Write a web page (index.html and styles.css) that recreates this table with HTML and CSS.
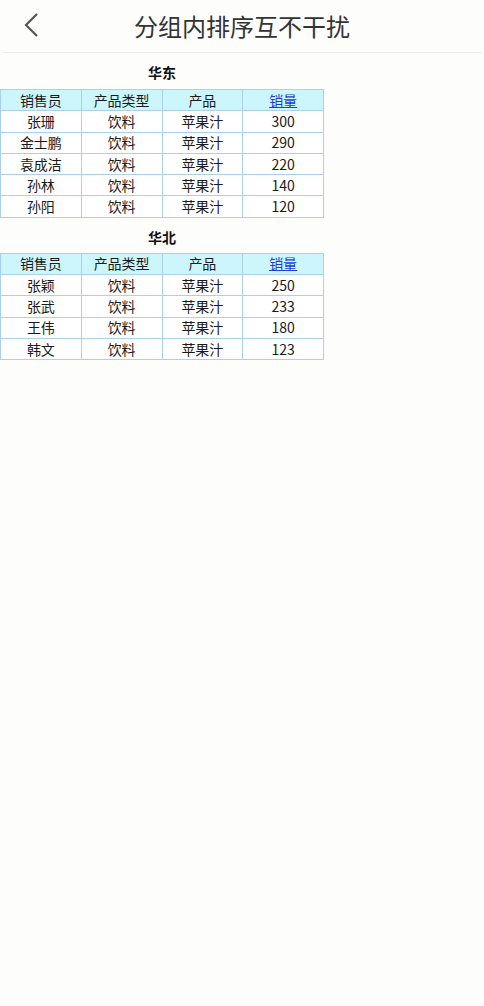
FILE: index.html
```html
<!DOCTYPE html>
<html lang="zh">
<head>
<meta charset="utf-8">
<link rel="stylesheet" href="styles.css">
</head>
<body>
<header class="topbar">
  <svg class="back" width="16" height="26" viewBox="0 0 16 26"><path d="M13 2 L2 13 L13 24" fill="none" stroke="#555" stroke-width="2.2"/></svg>
  <h1 class="title">分组内排序互不干扰</h1>
</header>
<main>
  <section class="group">
    <div class="group-title">华东</div>
    <table class="grid">
      <tr><th>销售员</th><th>产品类型</th><th>产品</th><th><a href="#">销量</a></th></tr>
      <tr><td>张珊</td><td>饮料</td><td>苹果汁</td><td>300</td></tr>
      <tr><td>金士鹏</td><td>饮料</td><td>苹果汁</td><td>290</td></tr>
      <tr><td>袁成洁</td><td>饮料</td><td>苹果汁</td><td>220</td></tr>
      <tr><td>孙林</td><td>饮料</td><td>苹果汁</td><td>140</td></tr>
      <tr><td>孙阳</td><td>饮料</td><td>苹果汁</td><td>120</td></tr>
    </table>
  </section>
  <section class="group">
    <div class="group-title">华北</div>
    <table class="grid">
      <tr><th>销售员</th><th>产品类型</th><th>产品</th><th><a href="#">销量</a></th></tr>
      <tr><td>张颖</td><td>饮料</td><td>苹果汁</td><td>250</td></tr>
      <tr><td>张武</td><td>饮料</td><td>苹果汁</td><td>233</td></tr>
      <tr><td>王伟</td><td>饮料</td><td>苹果汁</td><td>180</td></tr>
      <tr><td>韩文</td><td>饮料</td><td>苹果汁</td><td>123</td></tr>
    </table>
  </section>
</main>
</body>
</html>
```
FILE: styles.css
```css
html, body {
  margin: 0;
  padding: 0;
  background: #fdfdfc;
  font-family: "Noto Sans CJK SC", "Noto Sans", sans-serif;
  color: #222;
}
.topbar {
  height: 52px;
  margin: 0 2px;
  border-bottom: 1px solid #ececec;
  display: flex;
  align-items: center;
  justify-content: center;
  position: relative;
}
.back {
  position: absolute;
  left: 22px;
  top: 12px;
}
.title {
  margin: 0;
  font-size: 24px;
  font-weight: 400;
  color: #333;
  line-height: 52px;
}
.group {
  width: 324px;
}
.group-title {
  height: 36px;
  line-height: 38px;
  text-align: center;
  font-weight: 700;
  font-size: 14px;
  color: #111;
}
.group + .group .group-title {
  height: 35px;
}
.grid {
  border-collapse: collapse;
  width: 324px;
  table-layout: fixed;
  font-size: 14px;
}
.grid tr {
  height: 21.3px;
}
.grid th, .grid td {
  border: 1px solid #a9d0ee;
  padding: 0;
  text-align: center;
  line-height: 19px;
  font-weight: 400;
  color: #1a1a1a;
}
.grid th {
  background: #ccf6fc;
}
.grid th a {
  color: #1a3fd6;
  text-decoration: underline;
}
.grid td {
  background: #fff;
}
```
